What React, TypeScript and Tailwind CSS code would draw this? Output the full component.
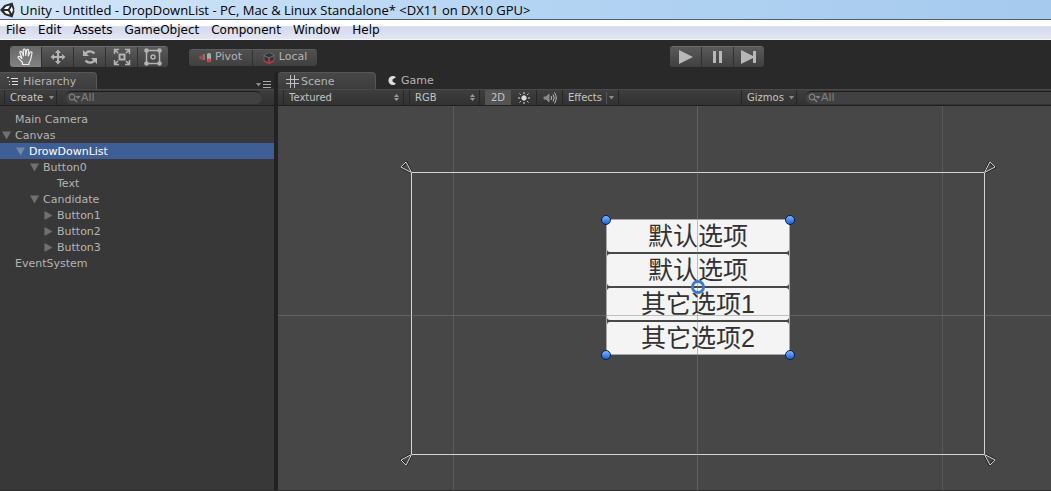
import type { ReactNode } from "react";
import { clsx } from "clsx";

type TreeNode = {
  name: string;
  pad: string;
  arrow?: "open" | "closed";
  selected?: boolean;
};

const menus = ["File", "Edit", "Assets", "GameObject", "Component", "Window", "Help"];

const nodes: TreeNode[] = [
  { name: "Main Camera", pad: "pl-0.5" },
  { name: "Canvas", pad: "pl-0.5", arrow: "open" },
  { name: "DrowDownList", pad: "pl-4", arrow: "open", selected: true },
  { name: "Button0", pad: "pl-[30px]", arrow: "open" },
  { name: "Text", pad: "pl-11" },
  { name: "Candidate", pad: "pl-[30px]", arrow: "open" },
  { name: "Button1", pad: "pl-11", arrow: "closed" },
  { name: "Button2", pad: "pl-11", arrow: "closed" },
  { name: "Button3", pad: "pl-11", arrow: "closed" },
  { name: "EventSystem", pad: "pl-0.5" },
];

const options = ["默认选项", "默认选项", "其它选项1", "其它选项2"];

function UnityLogo() {
  return (
    <svg className="h-4 w-4 shrink-0" viewBox="0 0 16 16" aria-hidden="true">
      <path fill="#2a2a2a" d="M0 8 4.500 3 12.500.5 14.500 7 14 8l.5 1-2 6.500-8-2.500Z" />
      <path fill="#fff" d="M4 7 6 4.500l4-1L8 7ZM4 9l2 2.500 4 1L8 9ZM9.800 8l2-3.500L13 8l-1.200 3.500Z" />
    </svg>
  );
}

function HandIcon() {
  return (
    <svg className="h-5 w-5" viewBox="0 0 20 20" fill="none" stroke="#eee" strokeWidth="1.2" strokeLinejoin="round" aria-hidden="true">
      <path d="M6.500 17.500v-2L2.200 10.800c-.6-1 .6-2 1.600-1.200L6 11.500 3.800 5.500c-.2-1.200 1.500-1.700 2-.5L7.600 9 7.200 3c0-1.300 1.900-1.300 2.100 0l.5 5.500.8-5.300c.3-1.200 2-1 2 .2L12.300 9l1.800-3.700c.6-1 2.200-.4 1.900.7L14.900 11.500c-.4 2.200-.9 3-1.900 4.200v1.800Z" />
    </svg>
  );
}

function MoveIcon() {
  return (
    <svg className="h-4 w-4" viewBox="0 0 16 16" fill="#b4b4b4" aria-hidden="true">
      <path d="M8 .5 11 4H9v3h3V5l3.500 3L12 11V9H9v3h2l-3 3.500L5 12h2V9H4v2L.5 8 4 5v2h3V4H5Z" />
    </svg>
  );
}

function RotateIcon() {
  return (
    <svg className="h-4 w-4" viewBox="0 0 16 16" aria-hidden="true">
      <g fill="none" stroke="#b4b4b4" strokeWidth="2.200">
        <path d="M12.500 4.500C10 1.500 5 1.500 3 5.500" />
        <path d="M3.500 11.500C6 14.500 11 14.500 13 10.500" />
      </g>
      <path fill="#b4b4b4" d="M1 1v6h6ZM15 15V9H9Z" />
    </svg>
  );
}

function ScaleIcon() {
  return (
    <svg className="h-[18px] w-[18px]" viewBox="0 0 18 18" fill="none" stroke="#b4b4b4" strokeWidth="1.500" aria-hidden="true">
      <rect x="6.500" y="6.500" width="5" height="5" strokeWidth="2" />
      <path d="M1.500 6V1.500H6M12 1.500h4.500V6M16.500 12v4.500H12M6 16.500H1.500V12M2 2l3 3M16 2l-3 3M16 16l-3-3M2 16l3-3" />
    </svg>
  );
}

function RectIcon() {
  return (
    <svg className="h-[18px] w-[18px]" viewBox="0 0 18 18" fill="none" stroke="#b4b4b4" aria-hidden="true">
      <rect x="2.500" y="2.500" width="13" height="13" strokeWidth="1.500" />
      <circle cx="9" cy="9" r="2" strokeWidth="1.500" />
      <g fill="#b4b4b4" stroke="none">
        <circle cx="2.500" cy="2.500" r="2.300" />
        <circle cx="15.500" cy="2.500" r="2.300" />
        <circle cx="2.500" cy="15.500" r="2.300" />
        <circle cx="15.500" cy="15.500" r="2.300" />
      </g>
    </svg>
  );
}

function PivotIcon() {
  return (
    <svg className="h-3 w-3" viewBox="0 0 12 12" aria-hidden="true">
      <rect x="3.500" y="2" width="2.500" height="6" fill="#777" />
      <rect x="8" y="1" width="4" height="9" rx="1.500" fill="#aaa" />
      <circle cx="2" cy="5.500" r="2" fill="#c33b46" />
      <circle cx="10" cy="8.500" r="2" fill="#d33a48" />
    </svg>
  );
}

function LocalIcon() {
  return (
    <svg className="h-3 w-3" viewBox="0 0 12 12" aria-hidden="true">
      <path d="m6 .5 5 2.500v6l-5 2.500L1 9V3Z" fill="#333" stroke="#666" />
      <path d="M1 3.500 6 6l5-2.500M6 6v5" fill="none" stroke="#777" />
      <path d="M1.500 9 6 11.200 10.500 9M6 6.500v4" fill="none" stroke="#c5303c" strokeWidth="1.500" />
    </svg>
  );
}

function ListIcon() {
  return (
    <svg className="h-3 w-3 shrink-0" viewBox="0 0 12 12" fill="#ddd" aria-hidden="true">
      <path d="M0 1h2v1H0ZM4 2h7v1H4ZM2 5h1v1H2ZM5 5h6v1H5ZM2 8h1v1H2ZM5 8h6v1H5Z" />
    </svg>
  );
}

function GridIcon() {
  return (
    <svg className="h-[13px] w-[13px] shrink-0" viewBox="0 0 13 13" stroke="#c0c0c0" aria-hidden="true">
      <path d="M4.500 0v13M8.500 0v13M0 4.500h13M0 8.500h13" />
    </svg>
  );
}

function GameIcon() {
  return (
    <svg className="h-[9px] w-[9px] shrink-0" viewBox="0 0 9 9" fill="#ddd" aria-hidden="true">
      <path d="M8 1.200A4.500 4.500 0 1 0 8 7.800L4.500 5.500v-2Z" />
    </svg>
  );
}

function SunIcon() {
  return (
    <svg className="h-3 w-3" viewBox="0 0 12 12" fill="#ddd" stroke="#ddd" aria-hidden="true">
      <circle cx="6" cy="6" r="2.200" />
      <path d="M6 0v2M6 10v2M0 6h2M10 6h2M1.500 1.500l1.300 1.300M9.200 9.200l1.300 1.300M1.500 10.500l1.300-1.300M9.200 2.800l1.300-1.300" />
    </svg>
  );
}

function SoundIcon() {
  return (
    <svg className="h-3 w-3.5" viewBox="0 0 14 12" fill="none" stroke="#bbb" aria-hidden="true">
      <path d="M1 5h2l3-3v8L3 7H1Z" fill="#888" stroke="#888" />
      <path d="M8 4q1.500 2 0 4M10 2.500q2.500 3.500 0 7M11.500.5q3.500 5.500 0 11" />
    </svg>
  );
}

function SearchIcon() {
  return (
    <svg className="h-2.5 w-[13px] shrink-0" viewBox="0 0 13 10" aria-hidden="true">
      <circle cx="4" cy="4" r="2.800" fill="none" stroke="#808080" strokeWidth="1.200" />
      <path d="m6 6 3 3" stroke="#808080" strokeWidth="1.400" />
      <path d="M7.500 3h5L10 6Z" fill="#808080" />
    </svg>
  );
}

function Caret() {
  return (
    <svg className="h-1 w-[5px] shrink-0" viewBox="0 0 5 4" fill="#8c8c8c" aria-hidden="true">
      <path d="M0 0h5L2.500 3.500Z" />
    </svg>
  );
}

function ToolButton({ label, active, className, children }: { label: string; active?: boolean; className: string; children: ReactNode }) {
  return (
    <button
      type="button"
      aria-label={label}
      aria-pressed={active}
      className={clsx(
        "flex items-center justify-center border-r border-[#303030] last:border-r-0",
        active ? "bg-linear-to-b from-[#686868] to-[#828282]" : "bg-linear-to-b from-[#5a5a5a] to-[#404040]",
        className
      )}
    >
      {children}
    </button>
  );
}

function SearchField({ label, className }: { label: string; className: string }) {
  return (
    <label className={clsx("flex h-[13px] items-center overflow-hidden border-t border-[#1c1c1c] bg-[#414141] pl-[3px]", className)}>
      <SearchIcon />
      <input
        type="text"
        aria-label={label}
        placeholder="All"
        className="w-full min-w-0 bg-transparent text-[11px] leading-3 text-[#b4b4b4] outline-none placeholder:text-[#808080]"
      />
    </label>
  );
}

function Popup({ label, value, className }: { label: string; value: string; className: string }) {
  return (
    <div className={clsx("flex items-center border-x border-[#262626] pr-1", className)}>
      <select aria-label={label} className="min-w-0 flex-1 appearance-none bg-transparent pl-[5px] text-[10px] leading-4 text-[#c4c4c4] outline-none">
        <option>{value}</option>
      </select>
      <svg className="h-[7px] w-[5px]" viewBox="0 0 5 7" fill="#999" aria-hidden="true">
        <path d="M0 3 2.500 0 5 3ZM0 4h5L2.500 7Z" />
      </svg>
    </div>
  );
}

function Hierarchy() {
  return (
    <aside className="flex w-[278px] shrink-0 flex-col border-r-4 border-[#222]">
      <div className="flex h-[17px] items-end justify-between pr-[3px]">
        <h2 className="flex h-[17px] w-[97px] items-center gap-1 rounded-tr-sm border-t border-r border-[#565656] bg-linear-to-b from-[#484848] to-[#3c3c3c] pl-[7px] pt-0.5 text-[11px]">
          <ListIcon />
          <span className="pt-px">Hierarchy</span>
        </h2>
        <button type="button" aria-label="Panel options" className="flex h-[9px] items-center gap-0.5">
          <Caret />
          <svg className="h-[7px] w-2" viewBox="0 0 8 7" stroke="#aaa" aria-hidden="true">
            <path d="M0 .5h8M0 3.500h8M0 6.500h8" />
          </svg>
        </button>
      </div>
      <div className="flex h-[17px] items-center border-y border-t-[#4a4a4a] border-b-[#202020] bg-linear-to-b from-[#3e3e3e] to-[#323232]">
        <button type="button" className="ml-1 flex h-full w-[53px] items-center justify-between border-x border-[#262626] pr-0.5 pl-[5px] text-[10px] text-[#c4c4c4]">
          Create
          <Caret />
        </button>
        <SearchField label="Search hierarchy" className="ml-2 mr-3 flex-1 rounded-full" />
      </div>
      <ul className="flex-1 bg-[#383838] pt-[5px] text-[11px] leading-4">
        {nodes.map((node) => (
          <li key={node.name} className={clsx("flex h-4 items-center gap-1", node.pad, node.selected && "bg-[#3e5f96] text-white")}>
            <svg className="h-[9px] w-[9px]" viewBox="0 0 9 9" fill={node.selected ? "#7487a8" : "#707070"} aria-hidden="true">
              {node.arrow === "open" && <path d="M0 .5h9L4.500 8.500Z" />}
              {node.arrow === "closed" && <path d="M.5 0v9L8.500 4.500Z" />}
            </svg>
            <span className="pt-0.5">{node.name}</span>
          </li>
        ))}
      </ul>
    </aside>
  );
}

function SceneToolbar() {
  return (
    <div className="flex h-[17px] items-stretch border-y border-t-[#4a4a4a] border-b-[#202020] bg-linear-to-b from-[#3e3e3e] to-[#323232] text-[10px] text-[#c4c4c4]">
      <Popup label="Draw mode" value="Textured" className="ml-[5px] w-[121px]" />
      <Popup label="Render mode" value="RGB" className="ml-[5px] w-[71px]" />
      <button type="button" aria-pressed="true" className="ml-[5px] w-[26px] bg-[#545454]">2D</button>
      <button type="button" aria-label="Scene lighting" className="flex w-[26px] items-center justify-center border-r border-[#262626]">
        <SunIcon />
      </button>
      <button type="button" aria-label="Scene audio" className="flex w-[26px] items-center justify-center border-r border-[#262626]">
        <SoundIcon />
      </button>
      <button type="button" className="flex w-14 items-center border-r border-[#262626] pl-[5px]">
        Effects
        <span className="ml-1 flex h-3 items-center border-l border-[#555] pl-0.5">
          <Caret />
        </span>
      </button>
      <button type="button" className="ml-auto flex w-14 items-center justify-between border-x border-[#262626] pr-0.5 pl-[5px]">
        Gizmos
        <Caret />
      </button>
      <SearchField label="Search scene" className="ml-2 w-[246px] self-center rounded-l-full" />
    </div>
  );
}

function Handle({ className }: { className: string }) {
  return (
    <span className={clsx("absolute h-2.5 w-2.5 rounded-full border border-[#10203c] bg-linear-to-b from-[#7db4ff] to-[#0d62dc]", className)} />
  );
}

function Camera({ className }: { className: string }) {
  return (
    <svg className={clsx("absolute h-3 w-3", className)} viewBox="0 0 12 12" fill="none" aria-hidden="true">
      <path d="M12 12 1 6.500 6.500 1Z" stroke="#222" strokeWidth="2" />
      <path d="M11.500 11.500.8 6 6 1Z" stroke="#ddd" />
    </svg>
  );
}

function SceneCanvas() {
  return (
    <div className="relative min-h-[384px] flex-1 overflow-hidden bg-[#474747]">
      <div className="absolute inset-y-0 left-[175px] w-px bg-[#595959]" />
      <div className="absolute inset-y-0 left-[664px] w-px bg-[#595959]" />

      {/* canvas bounds */}
      <div className="absolute top-[66px] left-[133px] h-[283px] w-[574px] border border-[#d4d4d4]">
        <Camera className="-top-3 -left-3" />
        <Camera className="-top-3 -right-3 rotate-90" />
        <Camera className="-right-3 -bottom-3 rotate-180" />
        <Camera className="-bottom-3 -left-3 -rotate-90" />
      </div>

      {/* selected rect and its handles */}
      <div className="absolute top-[113px] left-[328px] w-[184px] border border-[#a8a8a8]">
        <div className="flex flex-col gap-0.5">
          {options.map((text, i) => (
            <button
              key={i}
              type="button"
              className="h-8 rounded-[3px] bg-[#f4f4f4] font-['Liberation_Sans','Noto_Sans_CJK_SC',sans-serif] text-[25px] leading-8 text-[#323232]"
            >
              {text}
            </button>
          ))}
        </div>
        <Handle className="-top-[5px] -left-1.5" />
        <Handle className="-top-[5px] -right-1.5" />
        <Handle className="-bottom-1.5 -left-1.5" />
        <Handle className="-right-1.5 -bottom-1.5" />
      </div>

      <div className="absolute inset-y-0 left-[419px] w-px bg-[#808080]/45" />
      <div className="absolute inset-x-0 top-[209px] h-px bg-[#808080]/45" />
      <span className="absolute top-[174px] left-[413px] h-3.5 w-3.5 rounded-full border-3 border-[#3b7dcc]" />
    </div>
  );
}

export default function App() {
  return (
    <div className="flex min-h-screen flex-col bg-[#292929] font-['DejaVu_Sans',Verdana,sans-serif] text-[#b4b4b4]">
      <header>
        <div className="flex h-5 items-center gap-1 overflow-hidden border-b border-[#59606c] bg-linear-to-r from-[#d4e6f7] via-[#b4d4f3] to-[#a5caee]">
          <UnityLogo />
          <h1 className="font-['Open_Sans',sans-serif] text-[13px] leading-4 whitespace-nowrap text-black">
            Unity - Untitled - DropDownList - PC, Mac &amp; Linux Standalone* &lt;DX11 on DX10 GPU&gt;
          </h1>
        </div>
        <nav className="flex h-5 items-center gap-3 border-b border-[#f4f4f4] bg-linear-to-b from-white from-30% via-[#d4d9ec] via-35% to-[#e2e6f6] pl-1.5 text-[12px] text-black">
          {menus.map((menu) => (
            <button key={menu} type="button">{menu}</button>
          ))}
        </nav>
      </header>

      <div className="flex h-8 items-center pl-2.5">
        <div className="flex h-[21px] overflow-hidden rounded-[3px] border-t border-[#6a6a6a]">
          <ToolButton label="Hand" active className="w-8"><HandIcon /></ToolButton>
          <ToolButton label="Move" className="w-8"><MoveIcon /></ToolButton>
          <ToolButton label="Rotate" className="w-8"><RotateIcon /></ToolButton>
          <ToolButton label="Scale" className="w-8"><ScaleIcon /></ToolButton>
          <ToolButton label="Rect" className="w-[30px]"><RectIcon /></ToolButton>
        </div>
        <div className="mt-0.5 ml-[21px] flex h-[17px] overflow-hidden rounded-[3px] border-t border-[#5c5c5c] text-[11px] text-[#b4b4b4]">
          <button type="button" className="flex w-16 items-center justify-center gap-1 border-r border-[#303030] bg-linear-to-b from-[#505050] to-[#404040]">
            <PivotIcon />
            Pivot
          </button>
          <button type="button" className="flex w-16 items-center justify-center gap-1 bg-linear-to-b from-[#505050] to-[#404040]">
            <LocalIcon />
            Local
          </button>
        </div>
        <div className="ml-[353px] flex h-[21px] overflow-hidden rounded-[3px] border-t border-[#6a6a6a]">
          <ToolButton label="Play" className="w-8">
            <svg className="h-3.5 w-3.5" viewBox="0 0 14 14" fill="#b8b8b8"><path d="M0 0v14l14-7Z" /></svg>
          </ToolButton>
          <ToolButton label="Pause" className="w-8">
            <svg className="h-3.5 w-2.5" viewBox="0 0 10 14" fill="#b8b8b8"><path d="M0 1h3v12H0ZM6 1h3v12H6Z" /></svg>
          </ToolButton>
          <ToolButton label="Step" className="w-[30px]">
            <svg className="h-3.5 w-4" viewBox="0 0 16 14" fill="#b8b8b8"><path d="M0 0v14l12-6v5h3V1h-3v5Z" /></svg>
          </ToolButton>
        </div>
      </div>

      <main className="flex flex-1 border-b border-[#2c2c2c]">
        <Hierarchy />
        <section className="flex min-w-0 flex-1 flex-col">
          <div role="tablist" className="flex h-[17px] text-[11px]">
            <button type="button" role="tab" aria-selected="true" className="flex w-[98px] items-center gap-0.5 rounded-t-sm border-t border-r border-[#565656] bg-linear-to-b from-[#484848] to-[#3c3c3c] pl-2">
              <GridIcon />
              <span className="pt-0.5">Scene</span>
            </button>
            <button type="button" role="tab" aria-selected="false" className="flex items-center gap-1 pl-3">
              <GameIcon />
              <span className="pt-0.5">Game</span>
            </button>
          </div>
          <SceneToolbar />
          <SceneCanvas />
        </section>
      </main>
    </div>
  );
}
